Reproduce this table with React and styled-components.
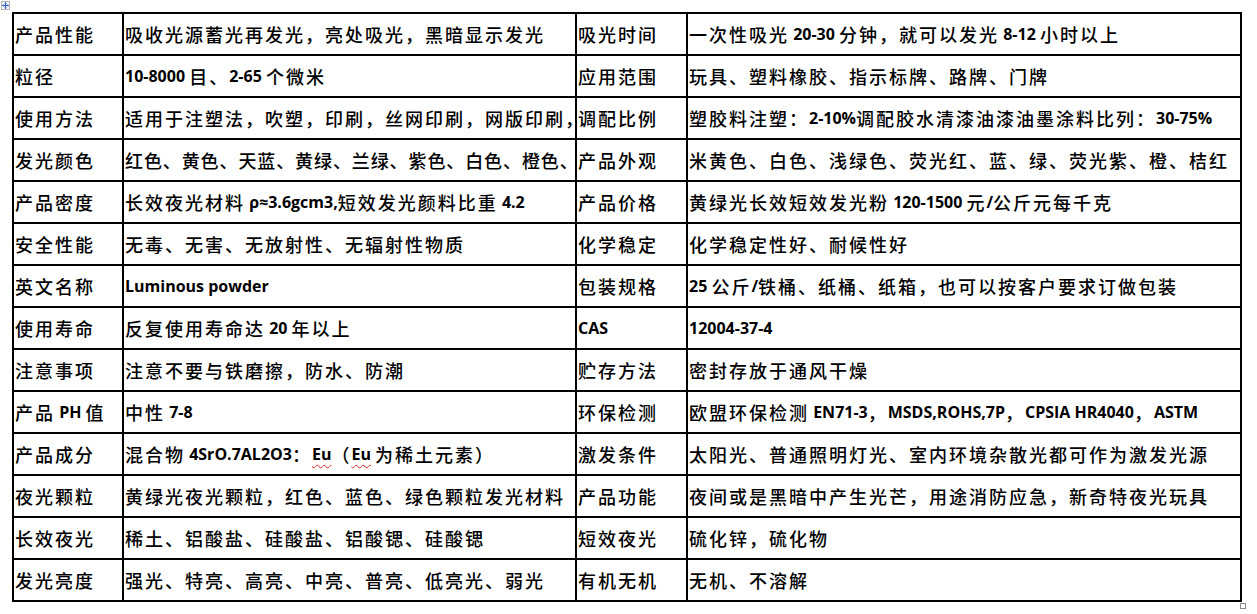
import React from 'react';
import styled, { createGlobalStyle } from 'styled-components';

const GlobalStyle = createGlobalStyle`
  html, body {
    margin: 0;
    background: #fff;
  }
`;

const Page = styled.div`
  position: relative;
  width: 1257px;
  height: 614px;
  box-sizing: border-box;
  padding: 12px 0 0 12px;
  overflow: hidden;
`;

const MoveHandle = styled.svg`
  position: absolute;
  left: 0;
  top: 0;
`;

const ResizeHandle = styled.div`
  position: absolute;
  left: 1240px;
  top: 603px;
  width: 4px;
  height: 4px;
  border: 1px solid #8a8a8a;
  background: #fff;
`;

const Sheet = styled.div`
  display: grid;
  grid-template-columns: 110px 453px 111px 554px;
  grid-auto-rows: 42px;
  width: max-content;
  border-top: 2px solid #000;
  border-left: 2px solid #000;
`;

const Cell = styled.div`
  box-sizing: border-box;
  display: flex;
  align-items: center;
  padding: 0 0 0 1px;
  border-right: 2px solid #000;
  border-bottom: 2px solid #000;
  white-space: nowrap;
  overflow: hidden;
  color: #000;
  font-family: 'Noto Sans CJK SC', 'Noto Sans CJK TC', sans-serif;
  font-size: 18px;
  font-weight: 500;
  letter-spacing: ${(p) => (p.$tight ? '0.9px' : '2px')};
`;

const Latin = styled.span`
  font-family: 'Open Sans', 'Liberation Sans', sans-serif;
  font-size: 16px;
  font-weight: 700;
  letter-spacing: 0;
  white-space: pre;
`;

const Misspelt = styled(Latin)`
  text-decoration: underline wavy #e02020;
  text-decoration-thickness: 1px;
  text-underline-offset: 4px;
`;

const LATIN = /([\x20-\x7E\u03C1\u2248]+)/;

// ascii runs are set in the bold latin face, the rest stays cjk
const runs = (text) =>
  typeof text !== 'string'
    ? text
    : text.split(LATIN).map((part, i) =>
        i % 2 === 1 ? <Latin key={i}>{part}</Latin> : part
      );

const rows = [
  ['产品性能', '吸收光源蓄光再发光，亮处吸光，黑暗显示发光', '吸光时间', '一次性吸光 20-30 分钟，就可以发光 8-12 小时以上'],
  ['粒径', '10-8000 目、2-65 个微米', '应用范围', '玩具、塑料橡胶、指示标牌、路牌、门牌'],
  ['使用方法', '适用于注塑法，吹塑，印刷，丝网印刷，网版印刷，', '调配比例', '塑胶料注塑：2-10%调配胶水清漆油漆油墨涂料比列：30-75%'],
  ['发光颜色', { text: '红色、黄色、天蓝、黄绿、兰绿、紫色、白色、橙色、', tight: true }, '产品外观', '米黄色、白色、浅绿色、荧光红、蓝、绿、荧光紫、橙、桔红'],
  ['产品密度', '长效夜光材料 ρ≈3.6gcm3,短效发光颜料比重 4.2', '产品价格', '黄绿光长效短效发光粉 120-1500 元/公斤元每千克'],
  ['安全性能', '无毒、无害、无放射性、无辐射性物质', '化学稳定', '化学稳定性好、耐候性好'],
  ['英文名称', 'Luminous powder', '包装规格', '25 公斤/铁桶、纸桶、纸箱，也可以按客户要求订做包装'],
  ['使用寿命', '反复使用寿命达 20 年以上', 'CAS', '12004-37-4'],
  ['注意事项', '注意不要与铁磨擦，防水、防潮', '贮存方法', '密封存放于通风干燥'],
  ['产品 PH 值', '中性 7-8', '环保检测', '欧盟环保检测 EN71-3，MSDS,ROHS,7P，CPSIA HR4040，ASTM'],
  [
    '产品成分',
    {
      text: (
        <>
          混合物<Latin> 4SrO.7AL2O3</Latin>：<Misspelt>Eu</Misspelt>（<Misspelt>Eu</Misspelt>
          <Latin> </Latin>为稀土元素）
        </>
      ),
    },
    '激发条件',
    '太阳光、普通照明灯光、室内环境杂散光都可作为激发光源',
  ],
  ['夜光颗粒', '黄绿光夜光颗粒，红色、蓝色、绿色颗粒发光材料', '产品功能', '夜间或是黑暗中产生光芒，用途消防应急，新奇特夜光玩具'],
  ['长效夜光', '稀土、铝酸盐、硅酸盐、铝酸锶、硅酸锶', '短效夜光', '硫化锌，硫化物'],
  ['发光亮度', '强光、特亮、高亮、中亮、普亮、低亮光、弱光', '有机无机', '无机、不溶解'],
];

const App = () => (
  <Page>
    <GlobalStyle />
    <MoveHandle width="11" height="11" viewBox="0 0 11 11">
      <rect x="1.5" y="1.5" width="8" height="8" fill="#fff" stroke="#b4b4b4" />
      <path d="M5.5 2.5v6M2.5 5.5h6" stroke="#2a5fc8" strokeWidth="1" />
      <path d="M5.5 2l-1.5 1.5h3zM5.5 9l-1.5-1.5h3zM2 5.5l1.5-1.5v3zM9 5.5l-1.5-1.5v3z" fill="#2a5fc8" />
    </MoveHandle>
    <Sheet>
      {rows.map((row, r) =>
        row.map((item, c) => {
          const cell = typeof item === 'string' ? { text: item } : item;
          return (
            <Cell key={`${r}-${c}`} $tight={cell.tight}>
              {runs(cell.text)}
            </Cell>
          );
        })
      )}
    </Sheet>
    <ResizeHandle />
  </Page>
);

export default App;
